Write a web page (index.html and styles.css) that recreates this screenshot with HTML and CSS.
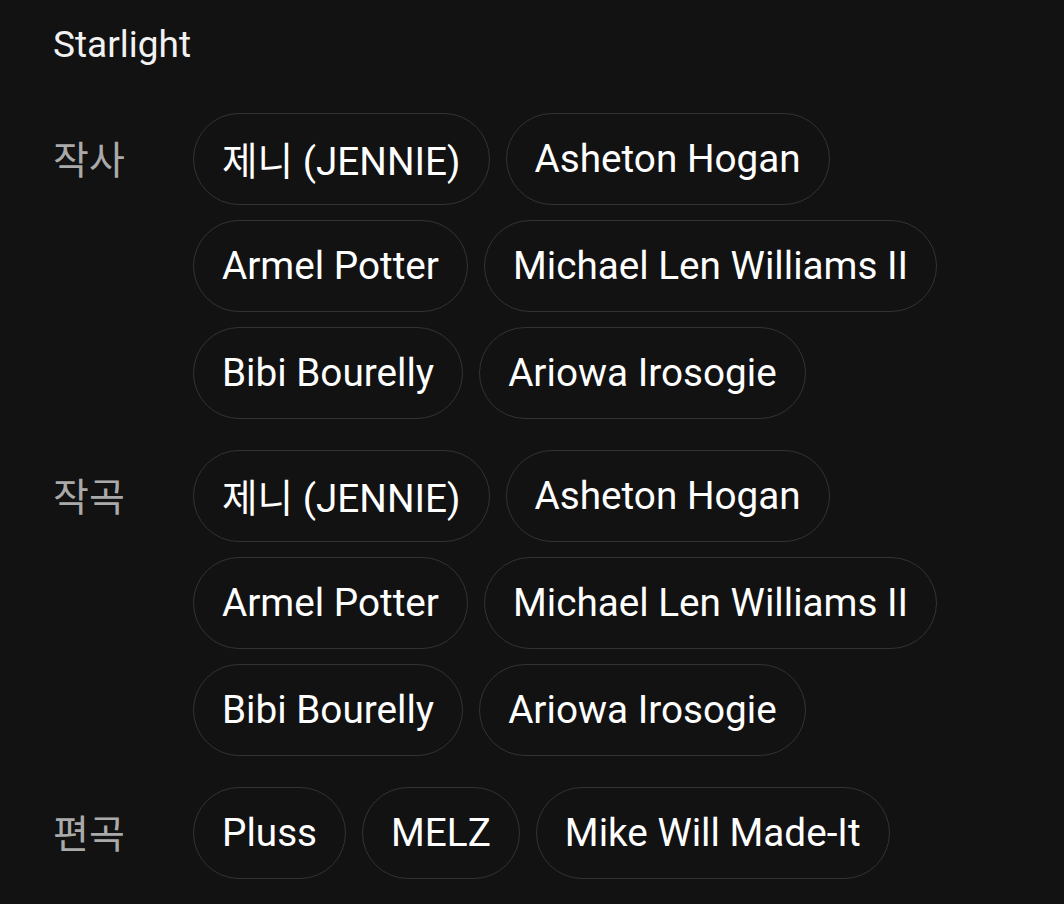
FILE: index.html
```html
<!DOCTYPE html>
<html lang="ko">
<head>
<meta charset="utf-8">
<title>Starlight</title>
<link rel="stylesheet" href="styles.css">
</head>
<body>
<main class="credits">
  <h1 class="title">Starlight</h1>
  <section class="group">
    <div class="label">작사</div>
    <div class="chips">
      <span class="chip">제니 (JENNIE)</span>
      <span class="chip">Asheton Hogan</span>
      <span class="chip">Armel Potter</span>
      <span class="chip">Michael Len Williams II</span>
      <span class="chip">Bibi Bourelly</span>
      <span class="chip">Ariowa Irosogie</span>
    </div>
  </section>
  <section class="group">
    <div class="label">작곡</div>
    <div class="chips">
      <span class="chip">제니 (JENNIE)</span>
      <span class="chip">Asheton Hogan</span>
      <span class="chip">Armel Potter</span>
      <span class="chip">Michael Len Williams II</span>
      <span class="chip">Bibi Bourelly</span>
      <span class="chip">Ariowa Irosogie</span>
    </div>
  </section>
  <section class="group">
    <div class="label">편곡</div>
    <div class="chips">
      <span class="chip">Pluss</span>
      <span class="chip">MELZ</span>
      <span class="chip">Mike Will Made-It</span>
    </div>
  </section>
</main>
</body>
</html>
```

FILE: styles.css
```css
html, body {
  margin: 0;
  padding: 0;
  background: #121212;
}

body {
  font-family: Roboto, "Noto Sans CJK KR", sans-serif;
  color: #ffffff;
}

.credits {
  padding: 24px 53px 0 53px;
  display: flex;
  flex-direction: column;
  gap: 31px;
}

.title {
  margin: 0 0 16px 0;
  font-size: 37px;
  font-weight: 400;
  line-height: 42px;
  color: #f1f1f1;
}

.group {
  display: grid;
  grid-template-columns: 140px 1fr;
  align-items: start;
}

.label {
  box-sizing: border-box;
  height: 92px;
  padding-bottom: 4px;
  display: flex;
  align-items: center;
  font-size: 39px;
  color: #aaaaaa;
}

.chips {
  display: flex;
  flex-wrap: wrap;
  column-gap: 16px;
  row-gap: 15px;
}

.chip {
  box-sizing: border-box;
  height: 92px;
  display: inline-flex;
  align-items: center;
  padding: 0 28px 2px 28px;
  border: 1px solid #333333;
  border-radius: 46px;
  font-size: 38.7px;
  color: #ffffff;
  white-space: nowrap;
}
```
